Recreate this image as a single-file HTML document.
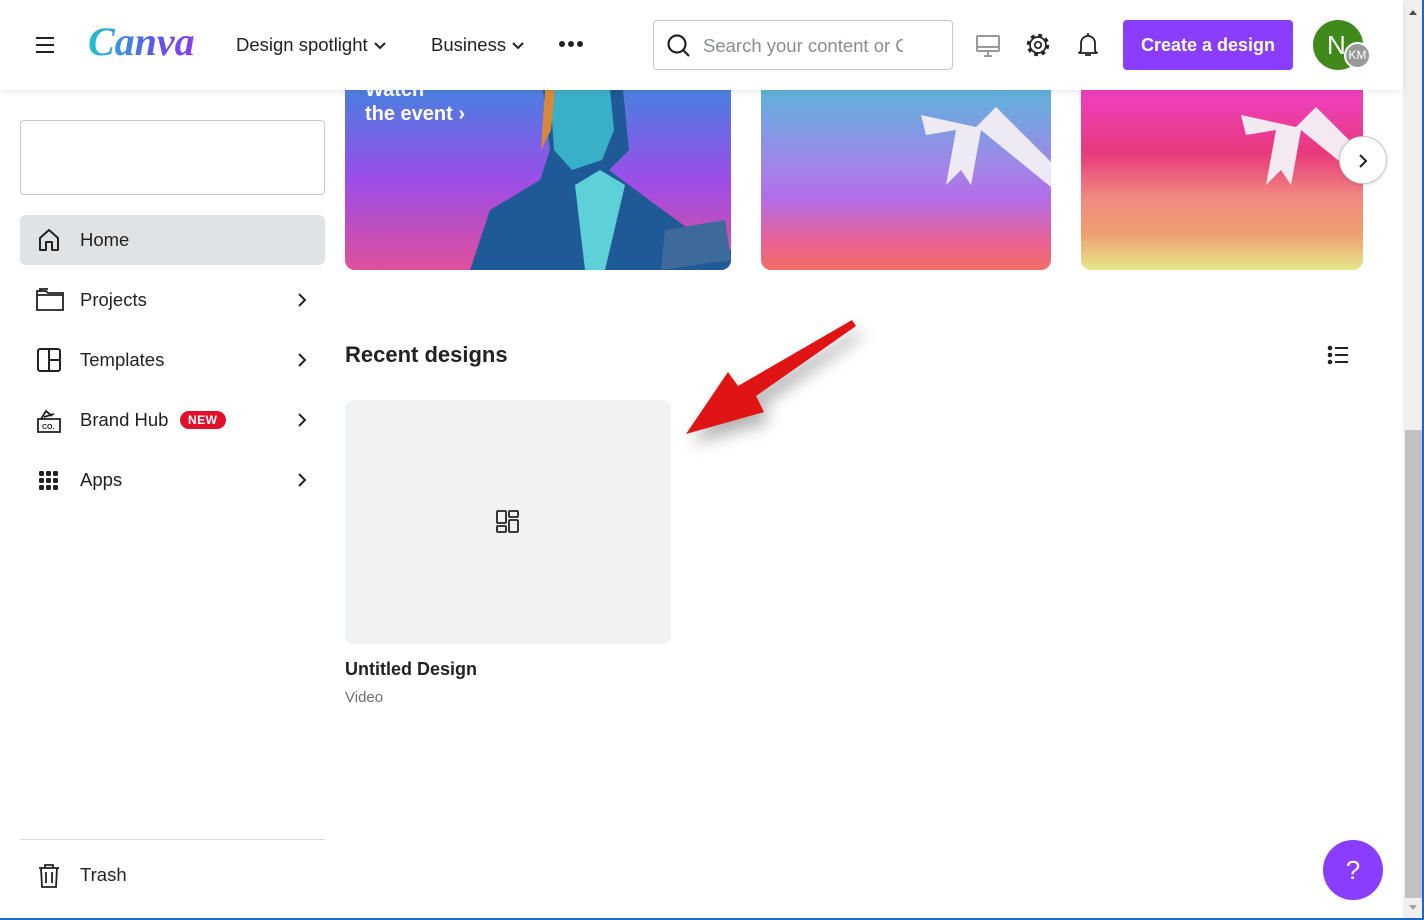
<!DOCTYPE html>
<html><head><meta charset="utf-8"><style>
*{box-sizing:border-box;margin:0;padding:0}
body{width:1424px;height:920px;overflow:hidden;background:#fff;font-family:"Liberation Sans",sans-serif;color:#0e1318;position:relative}
.hdr{position:absolute;left:0;top:0;width:1403px;height:90px;background:#fff;box-shadow:0 2px 6px rgba(0,0,0,.08);z-index:5}
.abs{position:absolute}
.nav{font-size:18.5px;color:#222}
.side .item{position:absolute;left:20px;width:305px;height:50px;border-radius:6px;font-size:18.5px;color:#222}
.side .item span.t{position:absolute;left:60px;top:14px}
.side .item svg.i{position:absolute;left:16px;top:13px}
.chev{position:absolute;right:18px;top:17px}
.card{position:absolute;top:90px;height:180px;border-radius:0 0 10px 10px;overflow:hidden}
</style></head><body>
<div class="hdr">
  <svg class="abs" style="left:36px;top:36px" width="18" height="18"><path d="M0 2h18M0 9h18M0 16h18" stroke="#222" stroke-width="2"/></svg>
  <div class="abs" style="left:88px;top:18px;font-family:'Liberation Serif',serif;font-style:italic;font-size:40px;font-weight:bold;background:linear-gradient(90deg,#1fc3d0,#5b5be8 60%,#8b3df0);-webkit-background-clip:text;color:transparent">Canva</div>
  <div class="abs nav" style="left:236px;top:34px">Design spotlight <svg width="14" height="10"><path d="M2 2l5 5 5-5" stroke="#222" stroke-width="2" fill="none"/></svg></div>
  <div class="abs nav" style="left:431px;top:34px">Business <svg width="14" height="10"><path d="M2 2l5 5 5-5" stroke="#222" stroke-width="2" fill="none"/></svg></div>
  <svg class="abs" style="left:558px;top:40px" width="26" height="8"><circle cx="4" cy="4" r="3" fill="#222"/><circle cx="13" cy="4" r="3" fill="#222"/><circle cx="22" cy="4" r="3" fill="#222"/></svg>
  <div class="abs" style="left:653px;top:20px;width:300px;height:50px;border:1px solid #c4c7cc;border-radius:4px">
    <svg class="abs" style="left:12px;top:12px" width="26" height="26"><circle cx="11" cy="11" r="8.5" stroke="#222" stroke-width="2.2" fill="none"/><path d="M17 17l6 6" stroke="#222" stroke-width="2.2"/></svg>
    <div class="abs" style="left:49px;top:14px;font-size:18.5px;color:#8a8d91;white-space:nowrap;width:200px;overflow:hidden">Search your content or Canva's</div>
  </div>
  <svg class="abs" style="left:975px;top:34px" width="26" height="24"><rect x="2" y="2" width="22" height="15" rx="1" stroke="#999" stroke-width="2" fill="none"/><path d="M2 13h22M9 22h8M13 17v5" stroke="#999" stroke-width="2"/></svg>
  <svg class="abs" style="left:1025px;top:32px" width="26" height="26" viewBox="0 0 26 26"><circle cx="13" cy="13" r="9.5" stroke="#222" stroke-width="3.5" fill="none" stroke-dasharray="3.7 3.76"/><circle cx="13" cy="13" r="8" stroke="#222" stroke-width="1.7" fill="#fff"/><circle cx="13" cy="13" r="3.2" stroke="#222" stroke-width="1.7" fill="none"/></svg>
  <svg class="abs" style="left:1076px;top:32px" width="24" height="26"><path d="M5 19V11a7 7 0 0 1 14 0v8l2 2H3z" stroke="#222" stroke-width="1.8" fill="none" stroke-linejoin="round"/><path d="M12 1v3M9 23h6" stroke="#222" stroke-width="1.8"/></svg>
  <div class="abs" style="left:1123px;top:20px;width:170px;height:50px;background:#8b3dff;border-radius:4px;color:#fff;font-weight:bold;font-size:18px;text-align:center;line-height:50px">Create a design</div>
  <div class="abs" style="left:1313px;top:20px;width:50px;height:50px;border-radius:50%;background:#3f8a1b;color:#fff;font-size:26px;line-height:50px;padding-left:14px">N</div>
  <div class="abs" style="left:1344px;top:42px;width:27px;height:27px;border-radius:50%;background:#999;border:2px solid #fff;color:#fff;font-size:12px;text-align:center;line-height:23px">KM</div>
</div>

<div class="side">
  <div class="abs" style="left:20px;top:120px;width:305px;height:75px;border:1px solid #c4c7cc;border-radius:4px"></div>
  <div class="item" style="top:215px;background:#e0e3e6"><svg class="i" width="26" height="24"><path d="M4 22V10l9-8 9 8v12h-6v-8h-6v8z" stroke="#222" stroke-width="2" fill="none" stroke-linejoin="round"/></svg><span class="t">Home</span></div>
  <div class="item" style="top:275px"><svg class="i" width="30" height="24"><path d="M1 7h26v15H1zM1 7V3h9l2 2h15v2M4 4V1h8" stroke="#222" stroke-width="1.8" fill="none"/></svg><span class="t">Projects</span><svg class="chev" width="10" height="16"><path d="M2 2l6 6-6 6" stroke="#222" stroke-width="2" fill="none"/></svg></div>
  <div class="item" style="top:335px"><svg class="i" width="26" height="24"><rect x="2" y="1" width="22" height="22" rx="2" stroke="#222" stroke-width="2" fill="none"/><path d="M13 1v22M13 12h11" stroke="#222" stroke-width="2"/></svg><span class="t">Templates</span><svg class="chev" width="10" height="16"><path d="M2 2l6 6-6 6" stroke="#222" stroke-width="2" fill="none"/></svg></div>
  <div class="item" style="top:395px"><svg class="i" width="26" height="26"><path d="M2 11h22v13H2zM5 11l5-8 6 5M8 9l10-3" stroke="#222" stroke-width="1.8" fill="none"/><text x="6" y="21" font-size="7" font-weight="bold" fill="#222" font-family="Liberation Sans">CO.</text></svg><span class="t">Brand Hub</span><span class="abs" style="left:160px;top:16px;background:#e0112b;color:#fff;font-size:12px;font-weight:bold;border-radius:10px;padding:2px 8px;letter-spacing:.5px">NEW</span><svg class="chev" width="10" height="16"><path d="M2 2l6 6-6 6" stroke="#222" stroke-width="2" fill="none"/></svg></div>
  <div class="item" style="top:455px"><svg class="i" width="26" height="26"><g fill="#222"><rect x="3" y="3" width="5" height="5" rx="1.5"/><rect x="10" y="3" width="5" height="5" rx="1.5"/><rect x="17" y="3" width="5" height="5" rx="1.5"/><rect x="3" y="10" width="5" height="5" rx="1.5"/><rect x="10" y="10" width="5" height="5" rx="1.5"/><rect x="17" y="10" width="5" height="5" rx="1.5"/><rect x="3" y="17" width="5" height="5" rx="1.5"/><rect x="10" y="17" width="5" height="5" rx="1.5"/><rect x="17" y="17" width="5" height="5" rx="1.5"/></g></svg><span class="t">Apps</span><svg class="chev" width="10" height="16"><path d="M2 2l6 6-6 6" stroke="#222" stroke-width="2" fill="none"/></svg></div>
  <div class="abs" style="left:20px;top:839px;width:305px;height:1px;background:#d8dadd"></div>
  <div class="item" style="top:850px"><svg class="i" width="26" height="26"><path d="M3 5h20M9 5V2h8v3M5 5l1 19h14l1-19M10 9v11M16 9v11" stroke="#222" stroke-width="1.8" fill="none"/></svg><span class="t">Trash</span></div>
</div>

<div class="card" style="left:345px;width:386px;background:linear-gradient(180deg,#4a7fe0 0%,#9b4ee8 50%,#e04f9a 100%)">
  <div class="abs" style="left:20px;top:-12px;color:#fff;font-weight:bold;font-size:20px;line-height:24px">Watch<br>the event ›</div>
  <svg class="abs" style="left:120px;top:0" width="266" height="180">
    <path d="M78 0h80l6 60 -20 20 40 30 55 40 27 10v20H5l20-60 50-30 10-30z" fill="#1f5a96"/>
    <path d="M85 0h60l4 40-12 30-30 10-18-20z" fill="#3ab0c8"/>
    <path d="M80 0h10l-4 40-10 20z" fill="#d48a3a"/>
    <path d="M110 95l25-15 25 15-20 85h-20z" fill="#5ed0d8"/>
    <path d="M200 140l60-10 6 40-70 10z" fill="#3d6a9a"/>
  </svg>
</div>
<div class="card" style="left:761px;width:290px;background:linear-gradient(180deg,#5fb2dd 0%,#a583e8 45%,#b16ee8 60%,#ea6090 85%,#f07068 100%)">
  <svg class="abs" style="left:150px;top:0" width="140" height="120"><path d="M10 25l55 12 20-20 25 25 30 30 0 25L70 40 60 95 50 80 35 95 45 40 15 45z" fill="#eeeaf4"/></svg>
</div>
<div class="card" style="left:1081px;width:282px;background:linear-gradient(180deg,#ee40c2 0%,#e83a7c 35%,#f08a80 60%,#eea070 80%,#e4e88a 100%)">
  <svg class="abs" style="left:150px;top:0" width="140" height="120"><path d="M10 25l55 12 20-20 25 25 30 30 0 25L70 40 60 95 50 80 35 95 45 40 15 45z" fill="#f2eaf0"/></svg>
</div>
<div class="abs" style="left:1339px;top:136px;width:48px;height:48px;border-radius:50%;background:#fff;border:1px solid #c4c7cc;box-shadow:0 1px 3px rgba(0,0,0,.15)"><svg class="abs" style="left:18px;top:16px" width="10" height="16"><path d="M2 2l6 6-6 6" stroke="#222" stroke-width="2" fill="none"/></svg></div>

<div class="abs" style="left:345px;top:342px;font-size:22px;font-weight:bold;color:#222">Recent designs</div>
<svg class="abs" style="left:1327px;top:344px" width="22" height="22"><g fill="#222"><circle cx="3" cy="4" r="2.3"/><circle cx="3" cy="11" r="2.3"/><circle cx="3" cy="18" r="2.3"/><rect x="8" y="3" width="13" height="2"/><rect x="8" y="10" width="13" height="2"/><rect x="8" y="17" width="13" height="2"/></g></svg>

<div class="abs" style="left:345px;top:400px;width:326px;height:244px;background:#f1f2f4;border-radius:8px">
  <svg class="abs" style="left:151px;top:110px" width="24" height="24"><g stroke="#222" stroke-width="1.8" fill="none"><rect x="1" y="1" width="9" height="12" rx="1"/><rect x="13" y="1" width="9" height="6" rx="1"/><rect x="1" y="16" width="9" height="6" rx="1"/><rect x="13" y="10" width="9" height="12" rx="1"/></g></svg>
</div>
<div class="abs" style="left:345px;top:659px;font-size:18px;font-weight:bold;color:#222">Untitled Design</div>
<div class="abs" style="left:345px;top:689px;font-size:15px;color:#6b6e72">Video</div>

<svg class="abs" style="left:660px;top:300px;filter:drop-shadow(6px 10px 8px rgba(0,0,0,.3))" width="220" height="160"><path d="M192 20L196 26 96 96 104 112 26 134 68 72 78 86z" fill="#e01414"/></svg>

<div class="abs" style="left:1323px;top:840px;width:60px;height:60px;border-radius:50%;background:#8b3dff;color:#fff;font-size:26px;text-align:center;line-height:60px">?</div>

<div class="abs" style="left:1403px;top:0;width:19px;height:920px;background:#f0f0f0"></div>
<div class="abs" style="left:1405px;top:430px;width:17px;height:468px;background:#c1c1c1"></div>
<svg class="abs" style="left:1407px;top:8px" width="12" height="8"><path d="M2 7l4-5 4 5z" fill="#505050"/></svg>
<svg class="abs" style="left:1407px;top:904px" width="12" height="8"><path d="M2 1l4 5 4-5z" fill="#a0a0a0"/></svg>
<div class="abs" style="left:1422px;top:0;width:2px;height:920px;background:#1b6ac9"></div>
<div class="abs" style="left:0;top:918px;width:1424px;height:2px;background:#1b6ac9"></div>
</body></html>
